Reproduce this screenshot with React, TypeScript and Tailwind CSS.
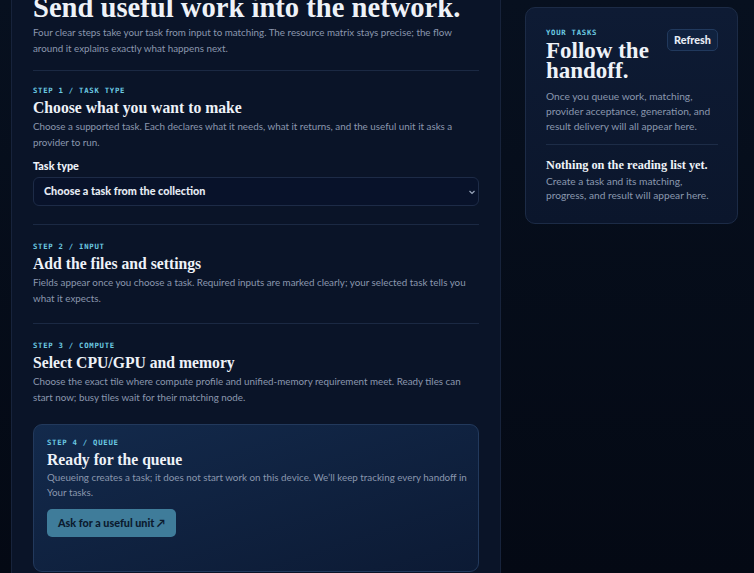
import React from "react";

const serif = { fontFamily: '"Liberation Serif", "DejaVu Serif", serif' };
const sans = { fontFamily: 'Lato, "Noto Sans", sans-serif' };
const mono = { fontFamily: '"DejaVu Sans Mono", "Liberation Mono", monospace' };

function StepLabel({ children }: { children: React.ReactNode }) {
  return (
    <div
      style={mono}
      className="text-[7.3px] leading-[10px] font-bold uppercase tracking-[0.1em] text-[#6ccbe3]"
    >
      {children}
    </div>
  );
}

function Heading({ children, className = "" }: { children: React.ReactNode; className?: string }) {
  return (
    <h2 style={serif} className={`text-[15.7px] leading-[20px] font-bold text-[#eef2f8] ${className}`}>
      {children}
    </h2>
  );
}

function Desc({ children, className = "" }: { children: React.ReactNode; className?: string }) {
  return (
    <p style={sans} className={`text-[9.8px] leading-[15.5px] text-[#8a97ae] ${className}`}>
      {children}
    </p>
  );
}

export default function App() {
  return (
    <div className="h-[573px] overflow-hidden bg-gradient-to-b from-[#07101f] to-[#040914]">
      <div className="flex items-start gap-6 pl-[11px] pr-4 pt-[7px]">
        {/* Composer column */}
        <main className="w-[490px] shrink-0 -mt-[35px] bg-[#0a1428] border-x border-[#17233b] px-[21px] pb-10">
          <h1 style={serif} className="text-[28.6px] leading-[36px] font-bold text-[#eef2f8] pt-[18px] whitespace-nowrap">
            Send useful work into the network.
          </h1>
          <p style={sans} className="-mt-[2px] text-[9.8px] leading-[16px] text-[#8a97ae]">
            Four clear steps take your task from input to matching. The resource matrix stays precise; the flow
            around it explains exactly what happens next.
          </p>

          {/* Step 1 */}
          <section className="mt-[14px] border-t border-[#1b2943] pt-[15px]">
            <StepLabel>Step 1 / Task type</StepLabel>
            <Heading className="mt-[2px]">Choose what you want to make</Heading>
            <Desc className="mt-[1px]">
              Choose a supported task. Each declares what it needs, what it returns, and the useful unit it asks a
              provider to run.
            </Desc>
            <label style={sans} className="mt-[9px] block text-[10.8px] leading-[14px] font-black text-[#eef2f8]">
              Task type
            </label>
            <div className="mt-[4px] h-[29px] rounded-[6px] border border-[#1d2b47] bg-[#08122a] flex items-center justify-between pl-[10px] pr-[2px]">
              <span style={sans} className="text-[10.8px] font-black text-[#e6ebf3]">
                Choose a task from the collection
              </span>
              <svg width="8" height="8" viewBox="0 0 8 8" className="text-[#9aa6bb]">
                <path d="M1.5 3 L4 5.5 L6.5 3" fill="none" stroke="currentColor" strokeWidth="1.2" />
              </svg>
            </div>
          </section>

          {/* Step 2 */}
          <section className="mt-[18px] border-t border-[#1b2943] pt-[17px]">
            <StepLabel>Step 2 / Input</StepLabel>
            <Heading className="mt-[2px]">Add the files and settings</Heading>
            <Desc className="leading-[16px]">
              Fields appear once you choose a task. Required inputs are marked clearly; your selected task tells you
              what it expects.
            </Desc>
          </section>

          {/* Step 3 */}
          <section className="mt-[17px] border-t border-[#1b2943] pt-[17px]">
            <StepLabel>Step 3 / Compute</StepLabel>
            <Heading className="mt-[2px]">Select CPU/GPU and memory</Heading>
            <Desc className="mt-[1px]">
              Choose the exact tile where compute profile and unified-memory requirement meet. Ready tiles can
              start now; busy tiles wait for their matching node.
            </Desc>
          </section>

          {/* Step 4 */}
          <section className="mt-[19px] rounded-[9px] border border-[#22395c] bg-gradient-to-br from-[#132a4c] to-[#0c1a34] pl-[13px] pr-[8px] pt-[13px] pb-[34px]">
            <StepLabel>Step 4 / Queue</StepLabel>
            <Heading className="mt-[2px]">Ready for the queue</Heading>
            <Desc className="leading-[15px]">
              Queueing creates a task; it does not start work on this device. We’ll keep tracking every handoff in
              Your tasks.
            </Desc>
            <button
              style={sans}
              className="mt-[9px] h-[28px] px-[11px] rounded-[5px] bg-[#3f7c9a] text-[10.8px] font-black text-[#0b1a2e]"
            >
              Ask for a useful unit ↗
            </button>
          </section>
        </main>

        {/* Task list card */}
        <aside className="flex-1 rounded-[10px] border border-[#1c2b46] bg-gradient-to-b from-[#0e1b34] to-[#0b162c] pl-[20px] pr-[19px] pt-[20px] pb-[21px]">
          <div className="flex items-start justify-between">
            <div>
              <StepLabel>Your tasks</StepLabel>
              <h2 style={serif} className="mt-[3px] text-[23px] leading-[20px] font-bold text-[#eef2f8]">
                Follow the
                <br />
                handoff.
              </h2>
            </div>
            <button
              style={sans}
              className="mt-[1px] h-[22px] px-[6px] rounded-[5px] border border-[#21395d] bg-[#10223f] text-[10.8px] font-black text-[#e8edf5]"
            >
              Refresh
            </button>
          </div>
          <p style={sans} className="mt-[8px] text-[10.2px] leading-[15px] text-[#8a97ae]">
            Once you queue work, matching, provider acceptance, generation, and result delivery will all appear here.
          </p>
          <div className="mt-[10px] border-t border-[#1d2c47] pt-[12px]">
            <h3 style={serif} className="text-[12.3px] leading-[16px] font-bold text-[#eef2f8] whitespace-nowrap">
              Nothing on the reading list yet.
            </h3>
            <p style={sans} className="mt-[2px] text-[10.2px] leading-[13.5px] text-[#8a97ae]">
              Create a task and its matching, progress, and result will appear here.
            </p>
          </div>
        </aside>
      </div>
    </div>
  );
}
